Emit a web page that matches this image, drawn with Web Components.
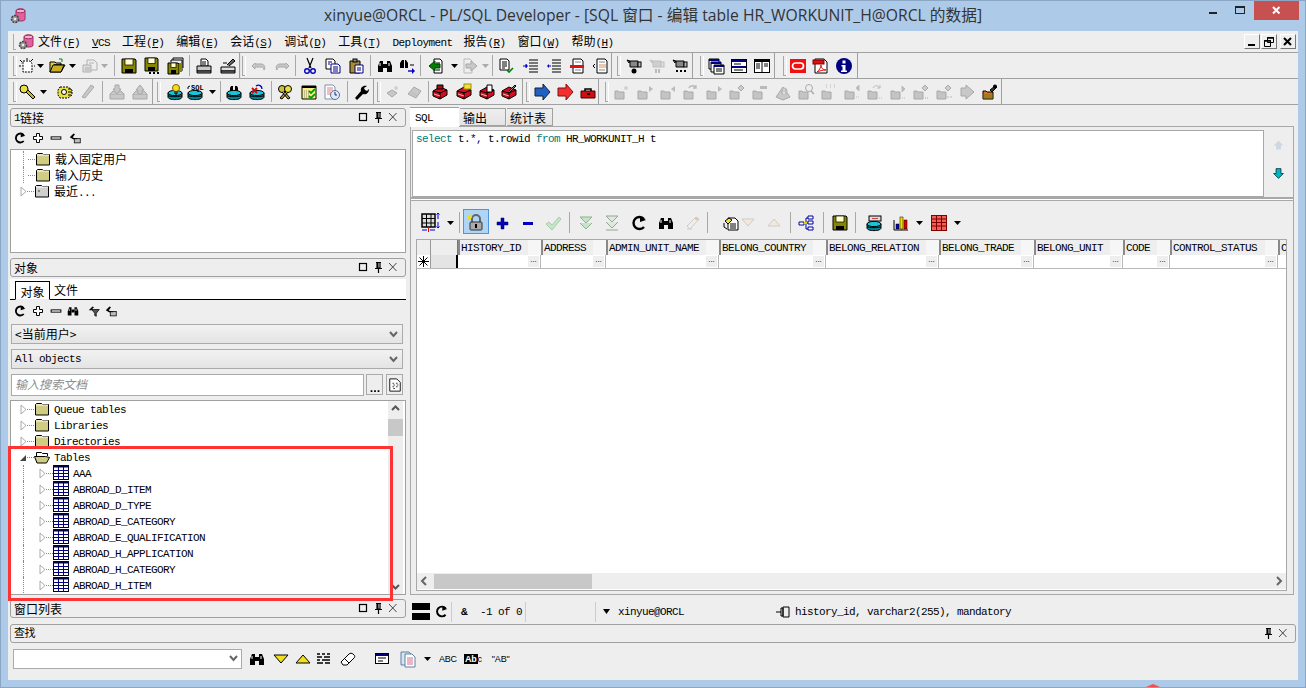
<!DOCTYPE html>
<html lang="zh">
<head>
<meta charset="utf-8">
<title>PL/SQL Developer</title>
<style>
  html, body { margin: 0; padding: 0; background: #aecae9; overflow: hidden; }
</style>
</head>
<body>
<app-window>
  <title-bar slot="title">xinyue@ORCL - PL/SQL Developer - [SQL 窗口 - 编辑 table HR_WORKUNIT_H@ORCL 的数据]</title-bar>
  <menu-bar slot="menu"></menu-bar>

  <tool-row slot="tools">
    <tool-strip x="10" end="240" items="grip:14 new:27 caret:40 open:57 caret:72 docgray:90 caretg:104 sep:114 save:129 saveas:152 saveall:175 sep:189 print:204 printset:228"></tool-strip>
    <tool-strip x="254" end="626" flat items="grip:256 undo:272 redo:295 sep:308 cut:323 copy:346 paste:369 sep:383 binoc:398 replace:421 sep:433 back:449 caret:467 fwd:483 caretg:498 sep:505 doccheck:519 indent:544 outdent:567 comment:590 uncomment:614"></tool-strip>
    <tool-strip x="626" end="707" items="grip:632 cam1:648 cam2:671 cam3:694"></tool-strip>
    <tool-strip x="707" end="789" items="grip:715 windows:730 list1:753 list2:776"></tool-strip>
    <tool-strip x="789" end="872" items="grip:798 oracle:812 pdf:835 info:858"></tool-strip>
  </tool-row>
  <tool-row slot="tools">
    <tool-strip x="10" end="153" items="grip:14 key:27 caret:43 gear:65 pengray:88 sep:102 dbin:117 dbout:140"></tool-strip>
    <tool-strip x="153" end="374" items="grip:158 dbbulb:175 dbsql:195 caret:212 sep:220 dbbin:234 dbx:257 sep:271 keys:285 checklist:309 clock:332 sep:347 wrench:361"></tool-strip>
    <tool-strip x="374" end="523" items="grip:378 g1:393 g2:415 sep:428 book1:440 book2:464 book3:487 book4:509"></tool-strip>
    <tool-strip x="523" end="599" items="grip:527 barrow:542 rarrow:565 toolbox:588"></tool-strip>
    <tool-strip x="599" end="1002" items="grip:606 f1:622 f2:645 f3:668 f4:691 f5:714 f6:737 f7:760 f8:783 f9:806 f10:829 f11:852 f12:875 f13:898 f14:921 f15:944 f16:967 app:990"></tool-strip>
  </tool-row>

  <left-dock slot="left">
    <dock-header>1<c-t>链接</c-t></dock-header>
    <tool-strip class="panelbar" x="10" end="406" bare size="12" items="refresh:20 plus:38 minus:56 filterdoc:75"></tool-strip>
    <tree-view style="height:104px">
      <tree-row line="1" icon="folder"><c-t>载入固定用户</c-t></tree-row>
      <tree-row line="1" icon="folder"><c-t>输入历史</c-t></tree-row>
      <tree-row exp="closed" icon="foldergray"><c-t>最近</c-t>...</tree-row>
    </tree-view>
    <dock-header style="margin-top:5px"><c-t>对象</c-t></dock-header>
    <tab-line></tab-line>
    <tool-strip class="panelbar" x="10" end="406" bare size="12" items="refresh:20 plus:38 minus:56 binoc:73 filter:94 filterdoc:111"></tool-strip>
    <combo-box style="margin:2px 3px 0 1px"><c-t>&lt;当前用户&gt;</c-t></combo-box>
    <combo-box style="margin:5px 3px 0 1px">All objects</combo-box>
    <search-line></search-line>
    <tree-view scroll style="height:195px;margin-top:4px">
      <tree-row exp="closed" icon="folder">Queue tables</tree-row>
      <tree-row exp="closed" icon="folder">Libraries</tree-row>
      <tree-row exp="closed" icon="folder">Directories</tree-row>
      <tree-row exp="open" icon="folderopen">Tables</tree-row>
      <tree-row level="1" exp="closed" icon="table">AAA</tree-row>
      <tree-row level="1" exp="closed" icon="table">ABROAD_D_ITEM</tree-row>
      <tree-row level="1" exp="closed" icon="table">ABROAD_D_TYPE</tree-row>
      <tree-row level="1" exp="closed" icon="table">ABROAD_E_CATEGORY</tree-row>
      <tree-row level="1" exp="closed" icon="table">ABROAD_E_QUALIFICATION</tree-row>
      <tree-row level="1" exp="closed" icon="table">ABROAD_H_APPLICATION</tree-row>
      <tree-row level="1" exp="closed" icon="table">ABROAD_H_CATEGORY</tree-row>
      <tree-row level="1" exp="closed" icon="table">ABROAD_H_ITEM</tree-row>
    </tree-view>
    <dock-header style="margin-top:4px"><c-t>窗口列表</c-t></dock-header>
  </left-dock>

  <sql-pane slot="right"></sql-pane>
  <find-pane slot="find"></find-pane>
  <red-frame slot="over"></red-frame>
</app-window>

<script>
// all icons are drawn on a 16x16 box
const disk = (x = '') => `<path d="M1 9v4c0 1.6 3 2.6 7 2.6s7-1 7-2.6V9z" fill="#008a9e" stroke="#000"/><ellipse cx="8" cy="9" rx="7" ry="2.6" fill="#19c3d8" stroke="#000"/><path d="M1 11.5c1 1.6 13 1.6 14 0" fill="none" stroke="#000"/>${x}`;
const floppy = (x = 0, y = 0, w = 14) => `<path d="M${x + 1} ${y + 1}h${w - 1}l1 1v${w - 1}H${x + 1}z" fill="#868600" stroke="#000"/><rect x="${x + 4}" y="${y + 1}" width="${w - 6}" height="${w / 2 - 1}" fill="#ffffd0" stroke="#000" stroke-width=".7"/><rect x="${x + 4}" y="${y + w - 3}" width="${w - 6}" height="4" fill="#000"/>`;
const book = (x = '') => `<path d="M1 7l7-4 7 3v5l-7 4-7-3z" fill="#d01020" stroke="#000"/><path d="M8 8v7M1 7l7 2 7-3" stroke="#000" fill="none"/><path d="M2 10l6 2" stroke="#ffb0b0"/>${x}`;
const gf = (x = '') => `<path d="M1 7h3l1 1h5v7H1z" fill="#c4c4c4" stroke="#a8a8a8"/>${x}`;
const gstroke = 'fill="#c8c8c8" stroke="#a8a8a8"';
const ICONS = {
  new: `<path d="M4 3h7l2 2v9H4z" fill="#fff" stroke="#000" stroke-dasharray="2 1"/><path d="M1 2l2 2M8 0v2M14 1l-2 2M0 8h2M15 8h1" stroke="#000"/><path d="M2 5l1 1M13 6l1-1" stroke="#e0c000"/>`,
  open: `<path d="M1 14V4h5l1 1h5v2H5L1 14h11l4-7H5" fill="#e0d040" stroke="#000"/><path d="M1 14l3-7h11l-3 7z" fill="#c8b020" stroke="#000"/><path d="M10 1l3 0 0 3" fill="none" stroke="#008000"/>`,
  docgray: `<path d="M5 2h7l3 3v7H5z" fill="#eee" stroke="#b0b0b0"/><path d="M1 7h8v7H1z" fill="#ddd" stroke="#b0b0b0"/><path d="M3 10h5M3 12h5M7 5h5" stroke="#b0b0b0"/>`,
  save: floppy(),
  saveas: floppy(0, -1, 13) + `<path d="M5 15h2M9 15h2M13 15h2" stroke="#000" stroke-width="2"/>`,
  saveall: floppy(0, 4, 11) + `<path d="M4 4V2h11v11h-2M6 2V0h10v10" fill="none" stroke="#000"/><path d="M12 5h3v8h-2z" fill="#868600"/>`,
  print: `<path d="M5 1h5l2 2v5H5z" fill="#fff" stroke="#000"/><path d="M6 4h4M6 6h4" stroke="#000"/><path d="M1 8h14v5H1z" fill="#c8c8c8" stroke="#000"/><path d="M1 13h14v2H1z" fill="#888" stroke="#000"/>`,
  printset: `<path d="M7 7l6-6 2 2-6 5" fill="#666" stroke="#000"/><path d="M1 9h14v4H1z" fill="#ddd" stroke="#000"/><path d="M1 13h14v2H1z" fill="#888" stroke="#000"/><path d="M3 5h4" stroke="#000"/>`,
  undo: `<path d="M4 5L1 8l3 3V9h6c2 0 3 1 3 3 2-3 0-6-3-6H4z" ${gstroke}/>`,
  redo: `<path d="M12 5l3 3-3 3V9H6c-2 0-3 1-3 3-2-3 0-6 3-6h6z" ${gstroke}/>`,
  cut: `<path d="M5 0l4 10M11 0L7 10" stroke="#000" fill="none" stroke-width="1.2"/><circle cx="5" cy="13" r="2.3" fill="none" stroke="#0000c0" stroke-width="1.4"/><circle cx="11" cy="13" r="2.3" fill="none" stroke="#0000c0" stroke-width="1.4"/>`,
  copy: `<path d="M1 1h7l2 2v8H1z" fill="#fff" stroke="#000"/><path d="M6 6h7l2 2v7H6z" fill="#fff" stroke="#000080"/><path d="M8 9h5M8 11h5M8 13h5M3 4h4M3 6h2" stroke="#000080"/>`,
  paste: `<path d="M2 3h10v12H2z" fill="#a88c30" stroke="#000"/><rect x="5" y="1" width="4" height="3" fill="#888" stroke="#000"/><path d="M7 7h8v8H7z" fill="#fff" stroke="#000080"/><path d="M9 10h4M9 12h4" stroke="#000080"/>`,
  binoc: `<path d="M1 14V8l2-5h3v11zM15 14V8l-2-5h-3v11z" fill="#000"/><rect x="6" y="6" width="4" height="4" fill="#000"/><path d="M3 5v3M12 5v3" stroke="#fff"/>`,
  replace: `<path d="M0 10V5l2-3h2v8zM8 10V5L6 2H5v8z" fill="#000"/><path d="M8 13h6" stroke="#0000c0" stroke-width="1.4"/><path d="M12 10l3 3-3 3z" fill="#0000c0"/><path d="M10 7h4" stroke="#000"/>`,
  back: `<path d="M6 1h6l2 2v12H6z" fill="#fff" stroke="#000"/><path d="M8 5h4M8 12h4" stroke="#000"/><path d="M7 3L1 8l6 5v-3h5V6H7z" fill="#008000" stroke="#004000"/>`,
  fwd: `<path d="M2 1h6l2 2v12H2z" fill="#eee" stroke="#bbb"/><path d="M9 3l6 5-6 5v-3H4V6h5z" ${gstroke}/>`,
  doccheck: `<path d="M2 1h7l2 2v9H2z" fill="#fff" stroke="#000"/><path d="M4 4h5M4 6h5M4 8h5M4 10h3" stroke="#000"/><path d="M9 12l2 2 4-4" fill="none" stroke="#008000" stroke-width="1.6"/>`,
  indent: `<path d="M6 2h9M6 5h9M6 8h9M6 11h9M6 14h9" stroke="#000"/><path d="M0 8h3M3 6v4" stroke="#0000c0"/><path d="M3 6l2 2-2 2z" fill="#0000c0"/>`,
  outdent: `<path d="M6 2h9M6 5h9M6 8h9M6 11h9M6 14h9" stroke="#000"/><path d="M2 8h3" stroke="#0000c0"/><path d="M3 6L1 8l2 2z" fill="#0000c0"/>`,
  comment: `<path d="M4 1h8l2 2v12H4z" fill="#fff" stroke="#000"/><rect x="1" y="7" width="14" height="3" fill="#e01010"/><path d="M6 4h6M6 12h6" stroke="#888"/>`,
  uncomment: `<path d="M4 1h8l2 2v12H4z" fill="#fff" stroke="#000"/><rect x="6" y="6" width="7" height="4" fill="#e8c8b0"/><path d="M2 6L0 8l2 2" fill="none" stroke="#000"/><path d="M6 4h6M6 12h6" stroke="#888"/>`,
  cam1: `<path d="M1 2l3 1-1 2zM4 3h8v6H4z" fill="#888" stroke="#000"/><rect x="12" y="4" width="3" height="5" fill="#bbb" stroke="#000"/><circle cx="8" cy="13" r="2.5" fill="#000"/>`,
  cam2: `<g opacity=".45"><path d="M1 2l3 1-1 2zM4 3h8v6H4z" fill="#aaa" stroke="#888"/><rect x="12" y="4" width="3" height="5" fill="#ccc" stroke="#888"/></g><path d="M7 11v4M10 11v4" stroke="#bbb" stroke-width="2"/>`,
  cam3: `<path d="M1 2l3 1-1 2zM4 3h8v6H4z" fill="#888" stroke="#000"/><rect x="12" y="4" width="3" height="5" fill="#bbb" stroke="#000"/><path d="M4 13h2M8 13h2M12 13h2" stroke="#000" stroke-width="2"/>`,
  windows: `<path d="M1 1h10v10H1z" fill="#fff" stroke="#000"/><path d="M1 2h10" stroke="#000080" stroke-width="2"/><path d="M3 4h10v10H3z" fill="#fff" stroke="#000"/><path d="M3 5h10" stroke="#000080" stroke-width="2"/><path d="M6 7h10v9H6z" fill="#fff" stroke="#000"/><path d="M6 8h10" stroke="#000080" stroke-width="2"/><path d="M8 11h6M8 13h6" stroke="#000"/>`,
  list1: `<rect x=".5" y="1.5" width="15" height="13" fill="#fff" stroke="#000"/><path d="M1 3h14" stroke="#000080" stroke-width="2"/><path d="M1 9h14" stroke="#000080" stroke-width="2"/><path d="M3 6h7M3 12h9" stroke="#000"/>`,
  list2: `<rect x=".5" y="1.5" width="15" height="13" fill="#fff" stroke="#000"/><path d="M1 3h14" stroke="#000" stroke-width="2"/><path d="M8 2v12" stroke="#000"/><path d="M2 6h4M2 8h4M2 10h4M10 6h4M10 8h4" stroke="#000"/>`,
  oracle: `<rect y="1" width="16" height="14" fill="#f01010"/><rect x="2.5" y="5" width="11" height="6" rx="3" fill="none" stroke="#fff" stroke-width="1.7"/>`,
  pdf: `<path d="M2 1h9l3 3v11H2z" fill="#fff" stroke="#000"/><rect x="0" y="2" width="11" height="4" fill="#e01010" stroke="#800000"/><path d="M4 14c2-1 4-5 4-7 0 3 2 5 5 5-3 0-7 1-9 2z" fill="none" stroke="#e01010"/>`,
  info: `<circle cx="8" cy="8" r="8" fill="#000080"/><rect x="6.5" y="2.5" width="3" height="3" fill="#fff"/><path d="M5.5 7h4v5.5h1.500V14h-6v-1.500h1.500V8.500H5.500z" fill="#fff"/>`,
  key: `<circle cx="5" cy="5" r="4" fill="#e8e040" stroke="#000"/><path d="M7 8l7 7 2-2-7-7z" fill="#c8b820" stroke="#000"/>`,
  gear: `<path d="M3 3h8l4 3v5l-4 3H3l-2-3V6z" fill="#e8e040" stroke="#000" stroke-dasharray="2 1"/><circle cx="7" cy="8" r="2.500" fill="#fff" stroke="#000"/><path d="M11 5h3M11 8h4M11 11h3" stroke="#000"/>`,
  pengray: `<path d="M2 13l3 1 9-11-3-2z" ${gstroke}/>`,
  dbin: `<path d="M1 10h14v5H1z" ${gstroke}/><path d="M1 10l3-3h8l3 3" ${gstroke}/><path d="M6 1h4v4h2l-4 5-4-5h2z" ${gstroke}/>`,
  dbout: `<path d="M1 10h14v5H1z" ${gstroke}/><path d="M1 10l3-3h8l3 3" ${gstroke}/><path d="M6 10h4V6h2L8 1 4 6h2z" ${gstroke}/>`,
  dbbulb: disk(`<circle cx="9" cy="4" r="3.500" fill="#f0e020" stroke="#806000"/><path d="M8 7v3h2V7" fill="#888" stroke="#000"/>`),
  dbsql: disk(`<path d="M1 5V3l2-1" fill="none" stroke="#000"/><text x="4" y="6" font-family="Liberation Mono" font-size="7" font-weight="bold" fill="#000">SQL</text>`),
  dbbin: disk(`<path d="M4 7V4l1-2h2v5zM12 7V4l-1-2H9v5z" fill="#000"/>`),
  dbx: disk(`<path d="M3 4l5 5M8 4L3 9" stroke="#e00000" stroke-width="1.800"/><path d="M7 2c3-2 6 0 6 3" fill="none" stroke="#0000c0" stroke-width="1.300"/>`),
  keys: `<circle cx="5" cy="5" r="3.500" fill="#c8c040" stroke="#000"/><circle cx="11" cy="5" r="3.500" fill="#e8e040" stroke="#000"/><path d="M5 8l6 7 2-1-6-7M11 8l-6 7-2-1 6-7" fill="#b0a020" stroke="#000"/>`,
  checklist: `<path d="M1 2h14v13H1z" fill="#f8f080" stroke="#000"/><path d="M1 3h14" stroke="#000" stroke-width="2"/><path d="M3 7h5M3 9h5M3 11h5M3 13h5" stroke="#888" stroke-dasharray="1 1"/><path d="M8 7l2 2 4-4M8 12l2 2 4-4" fill="none" stroke="#00a000" stroke-width="1.800"/>`,
  clock: `<path d="M1 1h8l2 2v12H1z" fill="#fff" stroke="#8090b0"/><path d="M3 4h6M3 6h6M3 8h4M3 10h4" stroke="#e08080"/><circle cx="11" cy="11" r="4.500" fill="#e0e8f4" stroke="#5070a0"/><path d="M11 8v3h2" fill="none" stroke="#203060"/>`,
  wrench: `<path d="M2 14l6-7c-1-3 2-6 6-5l-3 2 1 2 2 1 2-2c0 4-3 6-6 5l-6 6z" fill="#000"/>`,
  g1: `<path d="M2 9l5-3 5 3-5 4z" ${gstroke}/><path d="M11 2v4M9 4h4M9.500 2.500l3 3M12.500 2.500l-3 3" stroke="#ccc"/>`,
  g2: `<path d="M1 10L7 3l7 4-5 7z" ${gstroke}/><path d="M4 8l6 4" stroke="#bbb"/>`,
  book1: book(`<path d="M5 1h6v4H5z" fill="#a01010" stroke="#000"/>`),
  book2: book(`<rect x="8" y="0" width="7" height="5" fill="#f0e040" stroke="#a09000"/>`),
  book3: book(`<path d="M8 1h5v7H8z" fill="#fff" stroke="#000"/>`),
  book4: book(`<path d="M8 7l6-6 1 1-6 6" fill="#888" stroke="#000"/>`),
  barrow: `<path d="M1 4h8V0l7 8-7 8v-4H1z" fill="#2060c0" stroke="#102040"/>`,
  rarrow: `<path d="M1 4h8V0l7 8-7 8v-4H1z" fill="#f03030" stroke="#801010"/>`,
  toolbox: `<path d="M1 7h14v7H1z" fill="#d01010" stroke="#400000"/><path d="M5 7V5h6v2" fill="none" stroke="#000" stroke-width="1.500"/><rect x="7" y="9" width="3" height="2" fill="#000"/>`,
  f1: gf(`<path d="M11 2l1 1 1-1 1 1-1 1 1 1-1 1-1-1-1 1-1-1 1-1-1-1z" fill="#ccc"/>`),
  f2: gf(`<path d="M12 2l4 3-4 3z" fill="#bbb"/>`),
  f3: gf(`<path d="M15 2l-4 3 4 3z" fill="#bbb"/>`),
  f4: gf(`<path d="M6 4c1-3 6-3 7 0M13 1v3h-3" fill="none" stroke="#bbb" stroke-width="1.300"/>`),
  f5: gf(`<path d="M12 2l4 3-4 3z" fill="#bbb"/>`),
  f6: gf(`<path d="M12 1l3 3-3 3-3-3z" fill="#ccc" stroke="#aaa"/>`),
  f7: gf(`<rect x="8" y="2" width="7" height="3" fill="#bbb"/>`),
  f8: `<path d="M1 13l7-10 7 10-7 3z" ${gstroke}/><circle cx="9" cy="7" r="3.500" fill="#bbb"/><path d="M9 5v1M9 7v3" stroke="#fff"/>`,
  f9: gf(`<circle cx="11" cy="4" r="3.500" fill="#eee" stroke="#aaa"/><path d="M13 7l3 3" stroke="#aaa" stroke-width="1.500"/>`),
  f10: gf(`<path d="M5 3h2M9 3h2M13 3h2M5 1h2M9 1h2M13 1h2" stroke="#bbb" stroke-dasharray="1 1"/>`),
  f11: gf(`<path d="M12 4l3-3v6zM12 13h1M14 13h1" fill="#bbb" stroke="#bbb"/>`),
  f12: gf(`<path d="M6 4c1-3 6-3 7 0M13 1v3h-3M12 14h1M14 14h1" fill="none" stroke="#bbb"/>`),
  f13: gf(`<path d="M12 2l3 3-3 3zM12 14h1M14 14h1" fill="#bbb" stroke="#bbb"/>`),
  f14: gf(`<path d="M12 1l3 3-3 3-3-3zM12 14h1M14 14h1" fill="#ccc" stroke="#aaa"/>`),
  f15: gf(`<path d="M12 1l3 3-3 3-3-3z" fill="#ccc" stroke="#aaa"/><path d="M11 13h2M14 13h2" stroke="#bbb"/>`),
  f16: `<path d="M7 1l8 7-8 7v-3H2V4h5z" ${gstroke}/>`,
  app: `<path d="M1 7h3l1 1h6v7H1z" fill="#e07020" stroke="#000"/><path d="M1 10h10v5H1z" fill="#608020" opacity=".45"/><path d="M8 6l5-4 2 1-2 2-3 3z" fill="#333" stroke="#000"/><circle cx="13" cy="2.500" r="2" fill="#000"/>`,
  refresh: `<path d="M13 4A6 6 0 1 0 13 12" fill="none" stroke="#000" stroke-width="2.400"/><path d="M9 1l6 4-6 2z" fill="#000"/>`,
  plus: `<path d="M6 2h4v4h4v4h-4v4H6v-4H2V6h4z" fill="#fff" stroke="#000" stroke-width="1.300"/>`,
  minus: `<rect x="1.500" y="6.500" width="13" height="3" fill="#fff" stroke="#000" stroke-width="1.300"/>`,
  filterdoc: `<path d="M1 7l5-5 2 1-3 4 3 2-2 1z" fill="#000"/><rect x="7" y="8.500" width="8" height="6" fill="#bbb" stroke="#000"/><path d="M7 9h4" stroke="#000"/>`,
  filter: `<path d="M1 7l5-5 2 1-3 3 1 1z" fill="#000"/><path d="M5 6h10l-4 5v4l-2-1v-3z" fill="#555" stroke="#000"/>`,
  folder: `<path d="M1.500 5V3.500l1-1h5l1 1H14.500V14H1.500z" fill="#d1cc83" stroke="#000"/><path d="M2 4h12" stroke="#fff"/>`,
  foldergray: `<path d="M1.500 5V3.500l1-1h5l1 1H14.500V14H1.500z" fill="#cfcfcf" stroke="#000"/><path d="M2 4h12" stroke="#fff"/><path d="M4 7l2 2M6 7L4 9" stroke="#888"/>`,
  folderopen: `<path d="M2.500 13V3.500h5l1 1h5V7" fill="#fff" stroke="#000"/><path d="M.500 7.500h11l4 1-3 5.500H3z" fill="#d1cc83" stroke="#000"/>`,
  table: `<rect x=".5" y=".5" width="15" height="14" fill="#fff" stroke="#000"/><rect x="0" y="0" width="16" height="2.500" fill="#000040"/><path d="M0 5.500h16M0 8.500h16M0 11.500h16M5.500 2v13M10.500 2v13" stroke="#000080"/>`,
  gridset: `<rect x="-1" y="-1" width="13" height="13" fill="#ddd" stroke="#000" stroke-width="1.500"/><path d="M3.500 -1v13M8 -1v13M-1 3.500h13M-1 8h13" stroke="#000"/><path d="M15 -2v6M15 7v6" stroke="#0000d0"/><path d="M13.500 -.5L15 -2l1.500 1.500M13.500 11.500L15 13l1.500-1.500" fill="none" stroke="#0000d0"/><path d="M-1 15h5M7 15h5" stroke="#0000d0"/><path d="M5.500 12v5" stroke="#e00000"/>`,
  lock: `<path d="M4 8V5a4 4 0 0 1 8 0v3" fill="none" stroke="#666" stroke-width="2"/><rect x="2" y="8" width="12" height="8" rx="1" fill="#aaa" stroke="#333"/><rect x="7" y="10" width="2" height="4" fill="#000"/><path d="M0 2l3 3M3 0v4M0 5l4-2" stroke="#f0e000"/>`,
  bplus: `<path d="M7 3h3v4h4v3h-4v4H7v-4H3V7h4z" fill="#0000c0" stroke="#000050" stroke-width=".5"/>`,
  bminus: `<rect x="3" y="7" width="10" height="3" fill="#0000c0"/>`,
  gcheck: `<path d="M1 9l3-2 3 3 7-8 2 2-9 11z" fill="#c8e4c8" stroke="#a8d0a8"/>`,
  dbldown: `<path d="M2 2h12L8 8zM2 8l6 6 6-6" fill="#c8e4c8" stroke="#90b090"/>`,
  dbldown2: `<path d="M2 1h12L8 7zM2 7l6 6 6-6" fill="#e0e8e0" stroke="#90a890"/><path d="M2 15h12" stroke="#90a890"/>`,
  eraser: `<path d="M2 11l9-9 3 2-9 10z" fill="#eee" stroke="#ccc"/><path d="M10 3l3 2" stroke="#e8c0a0" stroke-width="2"/><path d="M2 14h5" stroke="#ccc"/>`,
  querydoc: `<path d="M5 3h7l3 3v9H5z" fill="#fff" stroke="#000"/><path d="M2 6l4-3 3 2-4 4z" fill="#f0e040" stroke="#000"/><path d="M7 9h6M7 11h6M7 13h6" stroke="#000"/><path d="M1 8v4l3 2" fill="none" stroke="#000"/>`,
  tridown: `<path d="M2 4h12L8 11z" fill="#f4e8d8" stroke="#ccc"/>`,
  triup: `<path d="M2 11h12L8 4z" fill="#f4e8d8" stroke="#ccc"/>`,
  flow: `<path d="M1 7h5v3H1zM10 1h5v3h-5zM10 6h5v3h-5zM10 12h5v3h-5z" fill="#fff" stroke="#0000a0"/><path d="M6 8h2M8 3v11M8 3h2M8 8h2M8 14h2" stroke="#0000a0"/><rect x="6" y="7" width="3" height="2" fill="#e0d000"/>`,
  dbprint: disk(`<rect x="3" y="1" width="12" height="5" fill="#ddd" stroke="#000"/><rect x="6" y="3" width="6" height="1" fill="#d04040"/>`),
  chart: `<path d="M1 15h14M1 15V5" stroke="#000"/><rect x="3" y="9" width="3" height="5" fill="#0000c0" stroke="#000" stroke-width=".5"/><rect x="7" y="2" width="3" height="12" fill="#f0e000" stroke="#000" stroke-width=".5"/><rect x="11" y="5" width="3" height="9" fill="#e00000" stroke="#000" stroke-width=".5"/>`,
  redgrid: `<rect x=".5" y=".5" width="15" height="15" fill="#f06058" stroke="#800000"/><path d="M1 4h14M1 7.500h14M1 11h14M5.500 1v14M10.500 1v14" stroke="#800000"/>`,
  arrowup: `<path d="M8 2l6 6h-3v5H5V8H2z" fill="#cdd8e4"/>`,
  arrowdown: `<path d="M5 2h6v6h3l-6 6-6-6h3z" fill="#00b8c4" stroke="#003040"/>`,
  dots: `<path d="M3 14h2v2H3zM7 14h2v2H7zM11 14h2v2h-2z" fill="#000"/>`,
  docdots: `<path d="M2 1h8l4 4v10H2z" fill="#fff" stroke="#000"/><path d="M5 6h2M9 6h2M6 8h2M10 8h2M5 10h2M9 10h2M6 12h2" stroke="#333"/>`,
  findlist: `<rect x="1.500" y="2.500" width="13" height="10" fill="#fff" stroke="#000"/><path d="M2 4h12" stroke="#000080" stroke-width="2"/><path d="M4 7h8M4 10h5" stroke="#000"/>`,
  finddocs: `<path d="M1 1h8l2 2v11H1z" fill="#d8e4f4" stroke="#6080a0"/><path d="M5 3h7l3 3v10H5z" fill="#fff" stroke="#6080a0"/><path d="M7 7h6M7 9h6M7 11h6M7 13h6" stroke="#d07090"/>`,
  downtri: `<path d="M1 4h14L8 12z" fill="#f0e020" stroke="#000"/>`,
  uptri: `<path d="M1 12h14L8 4z" fill="#f0e020" stroke="#000"/>`,
  lines: `<path d="M1 3h3M6 3h3M11 3h3M1 6h5M8 6h6M1 9h3M6 9h8M1 12h6M9 12h5" stroke="#000" stroke-width="1.300"/>`,
  clear: `<path d="M1 11l8-8c1-1 3-1 4 0l1 1c1 1 1 2 0 3l-7 7H3z" fill="#fff" stroke="#000"/><path d="M5 8l4 4" stroke="#000"/>`
};
const svg = (name, size = 16) => `<svg width="${size}" height="${size}" viewBox="0 0 16 16" style="display:block;overflow:visible">${ICONS[name] || ''}</svg>`;

const MONO = `"Liberation Mono", "Noto Sans CJK SC", monospace`;
const CJK = `"Noto Sans CJK SC", "Liberation Sans", sans-serif`;
const monoText = `font:11px/16px ${MONO};letter-spacing:-.6px;color:#000;white-space:nowrap;`;

class Base extends HTMLElement {
  constructor(html) {
    super();
    this.attachShadow({ mode: 'open' });
    if (html) this.shadowRoot.innerHTML = html;
  }
}

// a CJK run inside the monospace latin text
class CT extends Base {
  constructor() {
    super(`<style>:host{font:12px/16px ${CJK};letter-spacing:0;}</style><slot></slot>`);
  }
}

class AppWindow extends Base {
  constructor() {
    super(`<style>
      :host{display:flex;flex-direction:column;position:relative;width:1306px;height:688px;box-sizing:border-box;background:#aecae9;border:1px solid #8ba5c4;overflow:hidden;}
      .client{flex:1;margin:0 7px 7px 7px;background:#eee;display:flex;flex-direction:column;min-height:0;}
      .main{flex:none;height:519px;display:flex;}
      .mark{position:absolute;left:1145px;bottom:0;width:0;height:0;border-left:7px solid transparent;border-right:7px solid transparent;border-bottom:3px solid #f05050;}
    </style>
    <slot name="title"></slot>
    <div class="client">
      <slot name="menu"></slot>
      <slot name="tools"></slot>
      <div class="main"><slot name="left"></slot><slot name="right"></slot></div>
      <slot name="find"></slot>
    </div>
    <slot name="over"></slot>
    <div class="mark"></div>`);
  }
}

class TitleBar extends Base {
  constructor() {
    super(`<style>
      :host{display:grid;grid-template-columns:1fr auto 1fr;align-items:start;height:30px;flex:none;}
      .ico{margin:7px 0 0 9px;}
      .t{font:15.700px/29px "Open Sans","Noto Sans CJK SC",sans-serif;color:#333;white-space:nowrap;}
      .btns{display:flex;justify-content:flex-end;margin-right:6px;}
      .b{width:27px;height:19px;display:flex;align-items:center;justify-content:center;}
      .x{width:45px;background:#c75050;}
    </style>
    <div class="ico">${dbGear(16)}</div>
    <div class="t"><slot></slot></div>
    <div class="btns">
      <div class="b"><svg width="9" height="9"><rect y="6" width="8" height="2" fill="#222"/></svg></div>
      <div class="b"><svg width="11" height="9"><rect x=".5" y=".5" width="9" height="7" fill="none" stroke="#222"/><rect width="10" height="2" fill="#222"/></svg></div>
      <div class="b x"><svg width="9" height="9"><path d="M1 1l6.500 6.500M7.500 1L1 7.500" stroke="#fff" stroke-width="2"/></svg></div>
    </div>`);
  }
}

function dbGear(s) {
  return `<svg width="${s}" height="${s}" viewBox="0 0 16 16" style="display:block"><path d="M6 3c0-3 9-3 9 0v8c0 2-3 2-5 2H6z" fill="#e060a0" stroke="#a03060"/><ellipse cx="10.500" cy="3" rx="4.500" ry="1.800" fill="#f8b0d0" stroke="#a03060"/><circle cx="5" cy="11" r="3.500" fill="#999" stroke="#444" stroke-width="1.600" stroke-dasharray="2 1"/><circle cx="5" cy="11" r="1.200" fill="#eee"/></svg>`;
}

class MenuBar extends Base {
  constructor() {
    const items = ['文件|F', 'VCS', '工程|P', '编辑|E', '会话|S', '调试|D', '工具|T', 'Deployment', '报告|R', '窗口|W', '帮助|H'];
    const html = items.map(s => {
      if (s === 'VCS') return `<span class="m l"><u>V</u>CS</span>`;
      if (s === 'Deployment') return `<span class="m l" style="padding-right:5px">Deployment</span>`;
      const [c, k] = s.split('|');
      return `<span class="m"><span class="c">${c}</span><span class="l">(<u>${k}</u>)</span></span>`;
    }).join('');
    super(`<style>
      :host{display:flex;align-items:center;height:22px;flex:none;box-sizing:border-box;border-bottom:1px solid #a0a0a0;}
      .grip{width:2px;height:15px;margin-left:5px;border-left:1px solid #aaa;border-bottom:1px solid #aaa;}
      .i{margin:0 0 0 2px;}
      .m{padding:0 6px;white-space:nowrap;}
      .c{font:12px/16px ${CJK};}
      .l{${monoText}}
      .l u{text-underline-offset:1px;}
      .items{display:flex;align-items:baseline;margin-left:-2px;}
      .right{margin-left:auto;display:flex;gap:1px;margin-right:2px;}
      .w{width:16px;height:15px;box-sizing:border-box;border:1px solid;border-color:#fff #777 #777 #fff;display:flex;align-items:center;justify-content:center;background:#efefef;}
    </style>
    <div class="grip"></div><div class="i">${dbGear(16)}</div>
    <div class="items">${html}</div>
    <div class="right">
      <div class="w"><svg width="10" height="10"><rect x="1" y="7" width="7" height="2"/></svg></div>
      <div class="w"><svg width="10" height="10"><path d="M3.500.500h6v5h-6zM.500 3.500h6v6h-6z" fill="#efefef" stroke="#000"/><path d="M3 1h7M0 4h7" stroke="#000" stroke-width="1.500"/></svg></div>
      <div class="w" style="margin-left:2px"><svg width="10" height="10"><path d="M1 1l7 7M8 1L1 8" stroke="#000" stroke-width="2"/></svg></div>
    </div>`);
  }
}

class ToolRow extends Base {
  constructor() {
    super(`<style>:host{display:flex;height:26px;flex:none;box-sizing:border-box;border-bottom:1px solid #a0a0a0;padding-left:2px;}</style><slot></slot>`);
  }
}

// items are name:centre, the centre counted from the left of the page; each one gets the margin that brings it there
class ToolStrip extends Base {
  constructor() { super(); }
  connectedCallback() {
    const from = +this.getAttribute('x'), end = +this.getAttribute('end');
    const bare = this.hasAttribute('bare');
    const size = +(this.getAttribute('size') || 16);
    let prev = from, html = '';
    for (const it of this.getAttribute('items').split(' ')) {
      const [n, c] = it.split(':');
      const w = { caret: 7, caretg: 7, sep: 1, grip: 3 }[n] || size;
      const ml = +c - w / 2 - prev;
      prev = +c + w / 2;
      const st = `margin-left:${ml}px`;
      if (n === 'caret' || n === 'caretg') html += `<svg style="${st};flex:none" width="7" height="4"><path d="M0 0h7L3.500 4z" fill="${n === 'caret' ? '#000' : '#aaa'}"/></svg>`;
      else if (n === 'sep') html += `<div class="sep" style="${st}"></div>`;
      else if (n === 'grip') html += `<div class="grip" style="${st}"></div>`;
      else html += `<div class="i" style="${st}">${svg(n, size)}</div>`;
    }
    this.shadowRoot.innerHTML = `<style>
      :host{display:flex;align-items:center;flex:none;width:${end - from}px;box-sizing:border-box;${bare ? 'height:22px;' : 'border-right:1px solid #a0a0a0;'}${this.hasAttribute('flat') ? 'border-left:1px solid #e4e4e4;' : ''}}
      .i{flex:none;}
      .sep{flex:none;width:1px;height:21px;background:#a8a8a8;}
      .grip{flex:none;width:2px;height:19px;border-left:1px solid #a8a8a8;border-bottom:1px solid #a8a8a8;box-shadow:1px 0 0 #fff;}
    </style>${html}`;
  }
}

class LeftDock extends Base {
  constructor() {
    super(`<style>:host{display:flex;flex-direction:column;flex:none;width:396px;margin:3px 0 0 2px;}</style><slot></slot>`);
  }
}

class DockHeader extends Base {
  constructor() { super(); }
  connectedCallback() {
    const min = this.hasAttribute('nomin') ? '' : `<svg width="15" height="15" viewBox="0 0 15 15"><rect x="3.500" y="3.500" width="7" height="7" fill="none" stroke="#000" stroke-width="1.200"/></svg>`;
    this.shadowRoot.innerHTML = `<style>
      :host{display:flex;align-items:center;flex:none;height:19px;box-sizing:border-box;border:1px solid #a0a0a0;border-radius:3px;padding:0 4px 0 3px;${monoText}}
      .b{margin-left:auto;display:flex;}
      svg{display:block;}
    </style><slot></slot>
    <div class="b">${min}
      <svg width="15" height="15" viewBox="0 0 15 15"><path d="M5 2.500h5M6 3v5h3V3M4 8.500h7M7.500 9v4" fill="none" stroke="#000" stroke-width="1.200"/><rect x="6" y="3" width="1.500" height="5"/></svg>
      <svg width="15" height="15" viewBox="0 0 15 15"><path d="M3 3l7.500 8M10.500 3L3 11" stroke="#333" stroke-width=".9"/></svg>
    </div>`;
  }
}

class TreeView extends Base {
  constructor() { super(); }
  connectedCallback() {
    const sc = this.hasAttribute('scroll');
    this.shadowRoot.innerHTML = `<style>
      :host{display:flex;flex:none;box-sizing:border-box;background:#fff;border:1px solid #a0a0a0;overflow:hidden;}
      .list{flex:1;min-width:0;padding:${sc ? 0 : 1}px 0 0;overflow:hidden;}
      .bar{flex:none;width:15px;margin-right:2px;background:#eee;display:flex;flex-direction:column;align-items:center;}
      .thumb{align-self:stretch;height:17px;background:#c8c8c8;margin-top:2px;}
      .up{margin-top:4px;height:12px;} .dn{margin-top:auto;margin-bottom:4px;}
    </style><div class="list"><slot></slot></div>
    ${sc ? `<div class="bar"><svg class="up" width="9" height="6"><path d="M1 5l3.500-3.500L8 5" fill="none" stroke="#555" stroke-width="2"/></svg><div class="thumb"></div><svg class="dn" width="9" height="6"><path d="M1 1l3.500 3.500L8 1" fill="none" stroke="#555" stroke-width="2"/></svg></div>` : ''}`;
  }
}

class TreeRow extends Base {
  constructor() { super(); }
  connectedCallback() {
    const lv = +(this.getAttribute('level') || 0), exp = this.getAttribute('exp');
    const line = this.hasAttribute('line');
    let tw = '';
    if (exp === 'closed') tw = `<svg width="7" height="11" style="display:block"><path d="M1 1l5 4.500L1 10z" fill="#fff" stroke="#aaa"/></svg>`;
    else if (exp === 'open') tw = `<svg width="7" height="11" style="display:block"><path d="M0 9l6-6v6z" fill="#444"/></svg>`;
    const guide = lv ? `<div class="g"></div>` : '';
    this.shadowRoot.innerHTML = `<style>
      :host{display:flex;align-items:center;height:16px;padding-left:${lv ? 12 : 9}px;${monoText}}
      .g{flex:none;width:0;height:16px;border-left:1px dotted #888;margin-right:15px;}
      .tw{flex:none;width:7px;display:flex;justify-content:center;position:relative;}
      .d{flex:none;width:7px;border-top:1px dotted #888;}
      .v{flex:none;width:0;height:16px;border-left:1px dotted #888;margin-left:3px;margin-right:-3px;}
      .i{flex:none;margin:0 4px 0 0;}
      .lab{padding-top:1px;}
    </style>${guide}${line ? '<div class="v"></div>' : ''}<div class="tw">${tw}</div>
    <div class="d"></div><div class="i">${svg(this.getAttribute('icon'))}</div><div class="lab"><slot></slot></div>`;
  }
}

class TabLine extends Base {
  constructor() {
    super(`<style>
      :host{display:flex;flex:none;height:21px;box-sizing:border-box;margin-top:2px;background:#fff;border-bottom:1px solid #000;padding-left:5px;align-items:flex-end;font:12px/16px ${CJK};}
      .a{height:19px;margin-bottom:-1px;box-sizing:border-box;width:35px;text-align:center;border:1px solid #000;border-bottom:1px solid #eee;background:#fff;padding-top:2px;}
      .b{margin-left:4px;height:19px;padding-top:2px;box-sizing:border-box;}
    </style><div class="a">对象</div><div class="b">文件</div>`);
  }
}

class ComboBox extends Base {
  constructor() {
    super(`<style>
      :host{display:flex;align-items:center;flex:none;height:20px;box-sizing:border-box;border:1px solid #ababab;background:linear-gradient(#f2f2f2,#e4e4e4);padding:0 2px 0 3px;${monoText}}
      svg{margin-left:auto;margin-right:2px;}
    </style><slot></slot><svg width="9" height="7"><path d="M1 1l3.500 4L8 1" fill="none" stroke="#666" stroke-width="2"/></svg>`);
  }
}

class SearchLine extends Base {
  constructor() {
    super(`<style>
      :host{display:flex;flex:none;height:22px;margin:5px 3px 0 1px;gap:2px;}
      .in{flex:1;border:1px solid #aaa;background:#fff;font:italic 12px/18px ${CJK};color:#8c8c8c;padding-left:3px;box-sizing:border-box;}
      .b{flex:none;width:17px;height:21px;box-sizing:border-box;border:1px solid #aaa;background:#eee;display:flex;align-items:center;justify-content:center;}
    </style><div class="in">输入搜索文档</div><div class="b">${svg('dots', 14)}</div><div class="b" style="margin-left:1px">${svg('docdots', 14)}</div>`);
  }
}

class SqlPane extends Base {
  constructor() {
    super(`<style>
      :host{display:flex;flex-direction:column;flex:none;width:888px;margin-left:2px;}
      .tabs{display:flex;flex:none;height:21px;padding-left:2px;align-items:flex-end;font:12px/17px ${CJK};}
      .t{box-sizing:border-box;height:18px;border:1px solid #a0a0a0;border-left:0;padding:0 0 0 3px;background:linear-gradient(#eee,#e4e4e4);margin-left:1px;}
      .on{height:20px;width:49px;background:#fff;border:0;border-top:1px solid #a0a0a0;margin-left:0;margin-bottom:-1px;position:relative;z-index:1;${monoText};padding:2px 0 0 5px;}
      .box{flex:none;height:469px;margin:0 2px 0 2px;box-sizing:border-box;border:1px solid #a8a8a8;background:#fff;display:flex;flex-direction:column;}
      .edrow{display:flex;flex:none;height:70px;background:#eee;padding-top:3px;box-sizing:border-box;}
      .ed{width:852px;margin-left:1px;background:#fff;border:1px solid #a8a8a8;box-sizing:border-box;${monoText};padding:0 0 0 3px;}
      .k{color:#007a7a}.op{color:#000080}
      .ar{flex:1;display:flex;flex-direction:column;align-items:center;padding-top:9px;gap:15px;}
      .split{flex:none;height:4px;box-sizing:border-box;border-top:2px solid #a8a8a8;border-bottom:1px solid #a8a8a8;background:#fff;}
      .low{flex:1;background:#eee;display:flex;flex-direction:column;min-height:0;padding:0 6px 3px 6px;}
      .status{flex:none;display:flex;align-items:center;height:23px;margin-top:5px;margin-left:2px;${monoText}}
      .status svg{display:block;flex:none;}
      .sp{flex:none;width:1px;height:20px;background:#ccc;}
    </style>
    <div class="tabs">
      <div class="t on">SQL</div>
      <div class="t" style="width:46px">输出</div>
      <div class="t" style="width:46px">统计表</div>
    </div>
    <div class="box">
      <div class="edrow">
        <div class="ed"><span class="k">select</span> t.<span class="op">*,</span> t.rowid <span class="k">from</span> HR_WORKUNIT_H t</div>
        <div class="ar">${svg('arrowup', 13)}<div>${svg('arrowdown', 13)}</div></div>
      </div>
      <div class="split"></div>
      <div class="low">
        <result-bar></result-bar>
        <data-grid columns="HISTORY_ID:83 ADDRESS:65 ADMIN_UNIT_NAME:113 BELONG_COUNTRY:107 BELONG_RELATION:113 BELONG_TRADE:95 BELONG_UNIT:89 CODE:47 CONTROL_STATUS:108 C:11"></data-grid>
      </div>
    </div>
    <div class="status">
      <svg width="18" height="17" style="margin-left:2px"><rect width="18" height="7" fill="#000"/><rect y="10" width="18" height="7" fill="#000"/></svg>
      <div style="margin-left:5px">${svg('refresh', 13)}</div>
      <div class="sp" style="margin-left:3px"></div>
      <span style="margin-left:9px;font-weight:bold">&amp;</span>
      <span style="margin-left:13px">-1 of 0</span>
      <div class="sp" style="margin-left:3px"></div>
      <div class="sp" style="margin-left:69px"></div>
      <svg width="8" height="5" style="margin-left:7px"><path d="M0 0h7L3.500 5z"/></svg>
      <span style="margin-left:7px">xinyue@ORCL</span>
      <svg width="14" height="12" viewBox="0 0 14 12" style="margin-left:92px"><path d="M0 6h5M5 2h2v8H5zM7 1h6v10H7z" fill="none" stroke="#000"/></svg>
      <span style="margin-left:5px">history_id, varchar2(255), mandatory</span>
    </div>`);
  }
}

class ResultBar extends Base {
  constructor() {
    const after = 'bplus:502 bminus:528 gcheck:553 sep:569 dbldown:586 dbldown2:612 refresh:639 binoc:666 eraser:693 sep:707 querydoc:731 tridown:748 triup:774 sep:790 flow:806 sep:823 save:840 sep:855 dbprint:874 chart:901 caret:919 redgrid:939 caret:957';
    super(`<style>
      :host{display:flex;align-items:flex-start;flex:none;height:38px;}
      .lock{flex:none;width:26px;height:25px;margin:8px 0 0 3px;box-sizing:border-box;background:#aed4f6;border:1px solid #4f94d8;display:flex;align-items:center;justify-content:center;}
      tool-strip{height:25px;margin-top:9px;}
    </style>
    <tool-strip x="417" end="460" bare items="gridset:431 caret:450 sep:459"></tool-strip>
    <div class="lock">${svg('lock')}</div>
    <tool-strip x="489" end="966" bare items="${after}"></tool-strip>`);
  }
}

class DataGrid extends Base {
  constructor() { super(); }
  connectedCallback() {
    const cols = this.getAttribute('columns').split(' ').map(s => s.split(':'));
    const head = cols.map(([n, w], i) => `<div class="hc" style="width:${w}px"><span>${n}</span>${i < cols.length - 1 ? '<i></i>' : ''}</div>`).join('');
    const row = cols.map(([n, w], i) => `<div class="rc" style="width:${w}px">${i < cols.length - 1 ? '<b>...</b>' : ''}</div>`).join('');
    this.shadowRoot.innerHTML = `<style>
      :host{flex:1;display:flex;flex-direction:column;margin:0 0 0 -1px;box-sizing:border-box;border:1px solid #a8a8a8;background:#fff;overflow:hidden;min-height:0;${monoText}}
      .r{display:flex;flex:none;height:15px;overflow:hidden;}
      .rr{height:14px;box-sizing:border-box;border-bottom:1px solid #b8b8b8;}
      .hc,.rc{flex:none;box-sizing:border-box;position:relative;}
      .hc{background:#eee;border-left:2px solid #8a8a8a;padding-left:1px;display:flex;line-height:16px;}
      .hc span{flex:1;}
      .hc i{flex:none;width:13px;background:#f6f6f6;}
      .rc{border-right:1px solid #b8b8b8;display:flex;justify-content:flex-end;align-items:center;padding-right:1px;}
      .rc b{width:11px;height:11px;background:#eee;font:normal 8px/8px "Liberation Sans",sans-serif;letter-spacing:0;text-align:center;}
      .a{flex:none;width:14px;box-sizing:border-box;background:#eee;border-right:1px solid #999;display:flex;align-items:center;justify-content:center;}
      .m{flex:none;width:27px;box-sizing:border-box;background:#eee;border-right:1px solid #777;}
      .m2{background:#e4e4e4;border-right:2px solid #000;}
      .space{flex:1;}
      .hsb{flex:none;height:16px;background:#eee;display:flex;align-items:center;padding:0 3px;margin-bottom:1px;}
      .th{width:158px;height:15px;background:#c8c8c8;margin-left:7px;}
      .hsb svg:last-child{margin-left:auto;}
    </style>
    <div class="r"><div class="a"></div><div class="m"></div>${head}</div>
    <div class="r rr"><div class="a" style="background:#fff"><svg width="11" height="11"><path d="M5.500 0v11M0 5.500h11M1.500 1.500l8 8M9.500 1.500l-8 8" stroke="#000"/></svg></div><div class="m m2"></div>${row}</div>
    <div class="space"></div>
    <div class="hsb"><svg width="7" height="10"><path d="M6 1L2 5l4 4" fill="none" stroke="#666" stroke-width="2"/></svg><div class="th"></div><svg width="7" height="10"><path d="M1 1l4 4-4 4" fill="none" stroke="#666" stroke-width="2"/></svg></div>`;
  }
}

class FindPane extends Base {
  constructor() {
    super(`<style>
      :host{display:flex;flex-direction:column;flex:none;height:56px;box-sizing:border-box;padding:0 2px 0 2px;}
      .row{display:flex;align-items:center;height:31px;padding-left:3px;}
      .cb{flex:none;width:229px;height:20px;box-sizing:border-box;border:1px solid #aaa;background:#fff;display:flex;align-items:center;justify-content:flex-end;padding-right:3px;}
      tool-strip{height:20px;}
      .tx{flex:none;font:9px/14px "Liberation Sans",sans-serif;letter-spacing:-.2px;color:#000;}
      .inv{background:#000;color:#fff;padding:0 1px;font-weight:bold;}
    </style>
    <dock-header nomin>查找</dock-header>
    <div class="row">
      <div class="cb"><svg width="9" height="7"><path d="M1 1l3.500 4L8 1" fill="none" stroke="#666" stroke-width="2"/></svg></div>
      <tool-strip x="242" end="432" bare items="binoc:257 downtri:281 uptri:303 lines:324 clear:348 findlist:382 finddocs:408 caret:427"></tool-strip>
      <span class="tx" style="margin-left:7px">ABC</span>
      <span class="tx" style="margin-left:7px"><span class="inv">Ab</span>c</span>
      <span class="tx" style="margin-left:10px">"AB"</span>
    </div>`);
  }
}

class RedFrame extends Base {
  constructor() {
    super(`<style>:host{position:absolute;left:7px;top:445px;width:385px;height:155px;box-sizing:border-box;border:3px solid #f33;pointer-events:none;}</style>`);
  }
}

const defs = { 'c-t': CT, 'app-window': AppWindow, 'title-bar': TitleBar, 'menu-bar': MenuBar, 'tool-row': ToolRow, 'tool-strip': ToolStrip, 'left-dock': LeftDock, 'dock-header': DockHeader, 'tree-view': TreeView, 'tree-row': TreeRow, 'tab-line': TabLine, 'combo-box': ComboBox, 'search-line': SearchLine, 'sql-pane': SqlPane, 'result-bar': ResultBar, 'data-grid': DataGrid, 'find-pane': FindPane, 'red-frame': RedFrame };
for (const k in defs) customElements.define(k, defs[k]);
</script>
</body>
</html>
